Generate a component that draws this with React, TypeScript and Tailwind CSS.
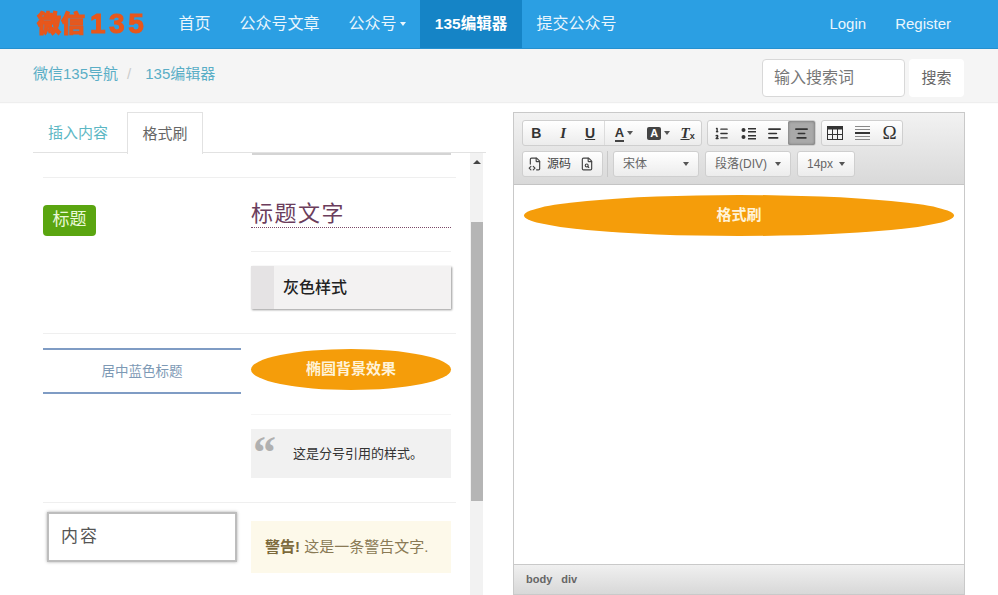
import React from 'react';
import { AlignCenter, AlignLeft, FileCode2, FileSearch, ListOrdered } from 'lucide-react';

const navItems = ['首页', '公众号文章', '公众号', '135编辑器', '提交公众号'];

const Caret = ({ className = '' }: { className?: string }) => (
  <span className={`inline-block h-0 w-0 border-x-[3px] border-t-[4px] border-x-transparent border-t-current ${className}`} />
);

const ToolButton: React.FC<{ width?: string; active?: boolean; children: React.ReactNode }> = ({ width = 'w-[27px]', active, children }) => (
  <div className={`flex h-full items-center justify-center text-[#333] ${width} ${active ? 'bg-[#a9a9a9] shadow-[inset_0_0_3px_#666] rounded-[2px]' : ''}`}>
    {children}
  </div>
);

const ToolGroup: React.FC<{ className?: string; children: React.ReactNode }> = ({ className = '', children }) => (
  <div className={`flex h-[26px] items-center rounded-[3px] border border-[#cfcfcf] bg-gradient-to-b from-white to-[#ececec] ${className}`}>
    {children}
  </div>
);

const Select: React.FC<{ label: string; width: string }> = ({ label, width }) => (
  <ToolGroup className={`justify-between px-[9px] text-[12px] text-[#666] ${width}`}>
    <span>{label}</span>
    <Caret className="text-[#555]" />
  </ToolGroup>
);

const BulletIcon = () => (
  <svg width="15" height="13" viewBox="0 0 15 13" fill="#333">
    <circle cx="2.5" cy="3" r="2" />
    <circle cx="2.5" cy="10" r="2" />
    <rect x="7" y="1" width="8" height="1.5" />
    <rect x="7" y="4" width="8" height="1.5" />
    <rect x="7" y="8" width="8" height="1.5" />
    <rect x="7" y="11" width="8" height="1.5" />
  </svg>
);

const TableIcon = () => (
  <svg width="16" height="14" viewBox="0 0 16 14" fill="none" stroke="#333">
    <rect x="0.5" y="0.5" width="15" height="13" />
    <rect x="0" y="0" width="16" height="3.5" fill="#333" stroke="none" />
    <path d="M5.5 3v10M10.5 3v10M0 8.5h16" />
  </svg>
);

const Toolbar = () => (
  <div className="flex h-[72px] flex-col gap-[5px] border-b border-[#c4c4c4] bg-gradient-to-b from-[#f2f2f2] to-[#d9d9d9] px-[8px] pt-[7px]">
    <div className="flex gap-[5px]">
      <ToolGroup className="w-[180px] font-['Liberation_Sans',sans-serif]">
        <ToolButton><b className="text-[14px]">B</b></ToolButton>
        <ToolButton><b className="font-['Liberation_Serif',serif] text-[15px] italic">I</b></ToolButton>
        <ToolButton><b className="text-[14px] underline">U</b></ToolButton>
        <ToolButton width="w-[40px] border-l border-[#dcdcdc]">
          <b className="border-b-2 border-[#444] text-[13px] leading-[15px]">A</b>
          <Caret className="ml-[3px] text-[#555]" />
        </ToolButton>
        <ToolButton width="w-[31px]">
          <b className="rounded-[2px] bg-[#444] px-[3px] text-[11px] leading-[13px] text-white">A</b>
          <Caret className="ml-[3px] text-[#555]" />
        </ToolButton>
        <ToolButton width="w-[27px]">
          <b className="font-['Liberation_Serif',serif] text-[15px] italic underline">T</b>
          <b className="mt-[7px] text-[9px] leading-none">x</b>
        </ToolButton>
      </ToolGroup>
      <ToolGroup className="w-[109px]">
        <ToolButton><ListOrdered size={15} strokeWidth={2.2} /></ToolButton>
        <ToolButton><BulletIcon /></ToolButton>
        <ToolButton><AlignLeft size={15} strokeWidth={2.6} /></ToolButton>
        <ToolButton active><AlignCenter size={15} strokeWidth={2.6} /></ToolButton>
      </ToolGroup>
      <ToolGroup className="w-[82px]">
        <ToolButton><TableIcon /></ToolButton>
        <ToolButton>
          <div className="flex w-[15px] flex-col gap-[2px]">
            <span className="h-px bg-[#888]" />
            <span className="h-px bg-[#888]" />
            <span className="h-[2px] bg-[#333]" />
            <span className="h-px bg-[#888]" />
            <span className="h-px bg-[#888]" />
          </div>
        </ToolButton>
        <ToolButton><span className="ml-[2px] font-['Liberation_Serif',serif] text-[19px] font-medium">Ω</span></ToolButton>
      </ToolGroup>
    </div>
    <div className="flex">
      <ToolGroup className="w-[81px] gap-[5px] px-[5px] text-[12px] text-[#444]">
        <FileCode2 size={14} className="shrink-0" />
        <span className="shrink-0">源码</span>
        <FileSearch size={14} className="ml-[4px] shrink-0" />
      </ToolGroup>
      <div className="mx-[4px] w-px bg-[#c8c8c8]" />
      <Select label="宋体" width="mr-[6px] ml-px w-[86px]" />
      <Select label="段落(DIV)" width="mr-[6px] w-[86px]" />
      <Select label="14px" width="w-[58px]" />
    </div>
  </div>
);

const LeftList = () => (
  <div className="w-[437px] pl-[10px]">
    <div className="ml-[209px] h-[2px] w-[199px] bg-[#d4d4d4]" />
    <div className="mt-[22px] grid h-[157px] w-[413px] grid-cols-[208px_1fr] border-y border-[#efefef]">
      <div className="pt-[27px]">
        <span className="inline-block h-[31px] w-[53px] rounded-[4px] bg-[#5aa510] text-center text-[17px] leading-[30px] text-[#eaf8d8]">标题</span>
      </div>
      <div className="pr-[5px]">
        <div className="h-[74px] border-b border-[#efefef] pt-[21px]">
          <div className="h-[29px] w-[200px] border-b border-dotted border-[#7b4a68] text-[22px] leading-[29px] tracking-[1.5px] text-[#6b3d5c]">标题文字</div>
        </div>
        <div className="mt-[14px] flex h-[43px] w-[200px] items-center bg-[#f3f2f2] shadow-[1px_1px_2px_#999]">
          <span className="h-full w-[23px] bg-[#e5e3e4]" />
          <b className="ml-[9px] text-[16px] font-medium text-[#222]">灰色样式</b>
        </div>
      </div>
    </div>
    <div className="grid h-[169px] w-[413px] grid-cols-[208px_1fr] border-b border-[#efefef]">
      <div className="pt-[14px] pr-[10px]">
        <div className="h-[46px] border-y-2 border-[#7f9cc4] text-center text-[13.5px] leading-[44px] text-[#7d99b5]">居中蓝色标题</div>
      </div>
      <div className="pr-[5px]">
        <div className="h-[81px] border-b border-[#f5f5f5] pt-[15px]">
          <div className="h-[41px] w-[200px] rounded-[50%] bg-[#f59d0a] text-center text-[15px] font-bold leading-[39px] text-[#fff3d8]">椭圆背景效果</div>
        </div>
        <div className="relative mt-[14px] h-[49px] w-[200px] bg-[#f1f1f1] pl-[42px] text-[13px] leading-[49px] text-[#333]">
          <span className="absolute left-[2px] top-[1px] font-['Liberation_Serif',serif] text-[46px] font-bold leading-[46px] text-[#b0b0b0]">“</span>
          这是分号引用的样式。
        </div>
      </div>
    </div>
    <div className="grid w-[413px] grid-cols-[208px_1fr]">
      <div className="pl-[4px] pt-[9px]">
        <div className="flex h-[50px] w-[190px] items-center border-[2px] border-[#bdbdbd] bg-white pl-[12px] text-[17px] tracking-[2px] text-[#555] shadow-[0_0_3px_#aaa]">内容</div>
      </div>
      <div className="pt-[18px]">
        <div className="h-[52px] w-[200px] overflow-hidden whitespace-nowrap bg-[#fdf9ea] pl-[14px] text-[15px] leading-[52px] text-[#8a7a55]">
          <b className="text-[#7c6a3c]">警告!</b> 这是一条警告文字.
        </div>
      </div>
    </div>
  </div>
);

export default function App() {
  return (
    <div className="flex h-[595px] w-[998px] flex-col overflow-hidden bg-white font-['Liberation_Sans','Noto_Sans_CJK_SC',sans-serif]">
      <nav className="flex h-[49px] shrink-0 items-stretch border-b border-[#2590cf] bg-[#2b9fe3] pl-[37px] pr-[33px] text-[16px] text-[#eaf6fd]">
        <div className="flex w-[127px] items-center text-[#e8571b] blur-[0.5px]">
          <span className="text-[24px] font-black [-webkit-text-stroke:1px_#e8571b]">微信</span>
          <span className="ml-[5px] text-[28px] font-bold tracking-[3.5px] [-webkit-text-stroke:1px_#e8571b]">135</span>
        </div>
        {navItems.map((item) => {
          const active = item === '135编辑器';
          return (
            <div key={item} className={`flex items-center ${active ? 'w-[102px] justify-center bg-[#1584c6] text-[15.5px] font-bold text-white' : 'px-[14.5px]'}`}>
              {item}
              {item === '公众号' && <Caret className="ml-[3px]" />}
            </div>
          );
        })}
        <div className="ml-auto flex items-center px-[15px] text-[15px]">Login</div>
        <div className="flex items-center px-[14px] text-[15px]">Register</div>
      </nav>

      <div className="flex h-[53px] shrink-0 bg-[#f5f5f5] pl-[33px] pr-[34px] text-[15px] shadow-[0_1px_1px_#eee]">
        <div className="flex h-[50px] items-center">
          <span className="text-[#5aaec6]">微信135导航</span>
          <span className="mx-[9px] text-[#ccc]">/</span>
          <span className="ml-[5px] text-[#5aaec6]">135编辑器</span>
        </div>
        <div className="ml-auto mt-[10px] flex h-[38px] w-[143px] items-center rounded-[4px] border border-[#d8d8d8] bg-white pl-[11px] text-[16px] text-[#777]">输入搜索词</div>
        <div className="ml-[4px] mt-[10px] flex h-[38px] w-[55px] items-center justify-center rounded-[4px] bg-white text-[#666]">搜索</div>
      </div>

      <main className="flex min-h-0 flex-1 pt-[10px]">
        <section className="ml-[33px] flex w-[453px] flex-col overflow-hidden">
          <div className="flex h-[41px] shrink-0 border-b border-[#e2e2e2] text-[15px]">
            <div className="flex w-[94px] items-center pl-[15px] pt-[2px] text-[#5cb7c4]">插入内容</div>
            <div className="-mb-px flex h-[42px] w-[76px] items-center justify-center border-x border-t border-[#e2e2e2] bg-white pt-[2px] text-[#666]">格式刷</div>
          </div>
          <div className="flex min-h-0 flex-1">
            <LeftList />
            <div className="relative h-full w-[13px] bg-[#f2f2f2]">
              <span className="absolute left-[3px] top-[7px] h-0 w-0 border-x-[4px] border-b-[4px] border-x-transparent border-b-[#444]" />
              <div className="absolute left-[1px] top-[69px] h-[279px] w-[12px] bg-[#b5b5b5]" />
            </div>
          </div>
        </section>

        <section className="ml-[27px] flex h-[483px] w-[452px] flex-col border border-[#c9c9c9] bg-white">
          <Toolbar />
          <div className="flex-1 px-[10px] pt-[10px]">
            <div className="h-[41px] w-[430px] rounded-[50%] bg-[#f59d0a] text-center text-[15px] font-bold leading-[40px] text-[#fff3d8]">格式刷</div>
          </div>
          <div className="flex h-[30px] items-center gap-[9px] border-t border-[#c9c9c9] bg-gradient-to-b from-[#f0f0f0] to-[#d8d8d8] pl-[12px] text-[11px] font-bold text-[#666]">
            <span>body</span>
            <span>div</span>
          </div>
        </section>
      </main>
    </div>
  );
}
